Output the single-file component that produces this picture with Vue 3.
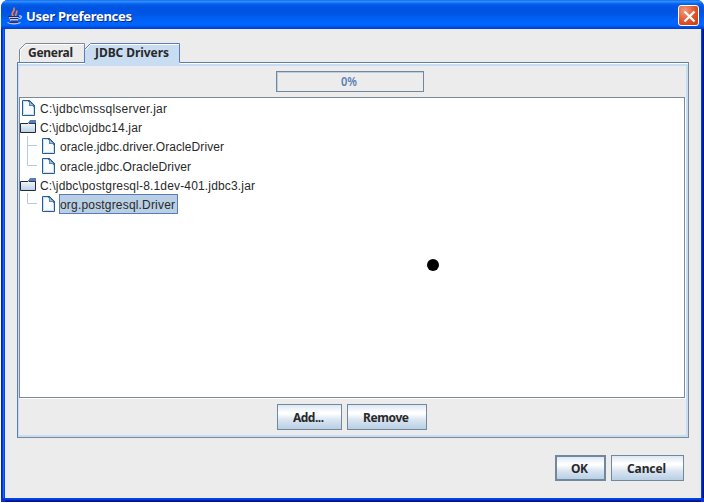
<script setup>
const rows = [
  { text: 'C:\\jdbc\\mssqlserver.jar', icon: 'file', level: 0, h: 19, w: 127 },
  { text: 'C:\\jdbc\\ojdbc14.jar', icon: 'folder', level: 0, h: 19, w: 102 },
  { text: 'oracle.jdbc.driver.OracleDriver', icon: 'file', level: 1, h: 20, w: 164 },
  { text: 'oracle.jdbc.OracleDriver', icon: 'file', level: 1, last: true, h: 19, w: 131 },
  { text: 'C:\\jdbc\\postgresql-8.1dev-401.jdbc3.jar', icon: 'folder', level: 0, h: 19, w: 215 },
  { text: 'org.postgresql.Driver', icon: 'file', level: 1, last: true, selected: true, h: 19, w: 115 },
]
</script>

<template>
  <div class="window">
    <header class="titlebar">
      <svg class="java" width="16" height="18" viewBox="0 0 16 18" fill="none">
        <path d="M6.500 9C2.500 6.500 8.500 4.500 7 .5M9 9C7.500 7 11 6 9.500 3.500" stroke="#f47b42" stroke-width="1.700" />
        <path d="M1.500 9.500H12L10.500 14H3.500z" fill="#bfc8ea" />
        <path d="M1 9.500H12M3 11.500H11.500M4 14H10.500" stroke="#242a68" stroke-width="1.200" />
        <path d="M12 9c3.500-.8 3 2.500-.5 3" stroke="#d5d5f0" stroke-width="1.200" />
        <path d="M.5 15.500C4 17.300 10 17.300 13.500 15.500" stroke="#c3c3e6" stroke-width="1.400" />
        <path d="M2.500 15.500H11" stroke="#2b3070" />
      </svg>
      <svg class="title" width="108" height="20"><text x="0" y="15" textLength="106">User Preferences</text></svg>
      <button class="close" aria-label="Close">
        <svg width="21" height="21" viewBox="0 0 21 21"><path d="M5.500 5.500l10 10M15.500 5.500l-10 10" stroke="#fff" stroke-width="2.300" /></svg>
      </button>
    </header>

    <main class="content">
      <nav class="tabs">
        <svg width="162" height="20" viewBox="0 0 162 20" class="bold">
          <path d="M.5 19V6.500L6.500.5H65.500V19" fill="#ececec" stroke="#7a8a99" />
          <path d="M1.500 19V7L7 1.500H65" fill="none" stroke="#fff" />
          <path d="M66 21V6.500L71.500.5H160.500V21" fill="#c8ddf2" />
          <path d="M65.500 19V6.500L71.500.5H160.500V19" fill="none" stroke="#5b7db5" />
          <path d="M66.500 7L71.500 1.500H160" fill="none" stroke="#fff" />
          <text x="9" y="14" textLength="45">General</text>
          <text x="76" y="14" textLength="74">JDBC Drivers</text>
        </svg>
      </nav>
      <section class="panel">
        <div class="progress"><svg width="18" height="17"><text x="1" y="13" textLength="16" lengthAdjust="spacingAndGlyphs">0%</text></svg></div>
        <div class="tree">
          <div v-for="row in rows" :key="row.text" class="row" :style="{ height: row.h + 'px' }">
            <svg v-if="row.level" class="branch" width="20" height="20" viewBox="0 0 20 20">
              <path :d="row.last ? 'M7.500 -2V8.500H17' : 'M7.500 -1V20M7.500 8.500H17'" fill="none" stroke="#b5cbe2" />
            </svg>
            <svg v-if="row.icon === 'file'" class="icon" width="20" height="16" viewBox="0 0 20 16">
              <path d="M2.500.5H9.500L14.500 5.500V15.500H2.500z" fill="#f8fbff" stroke="#285b92" />
              <path d="M3.500 14V1.500H9M4 14.500H13.500V7" fill="none" stroke="#c9dff2" />
              <path d="M8.500 .5L14.500 6.500" stroke="#285b92" stroke-width="1.800" />
              <path d="M9 1v5h5z" fill="#5b87b8" /><path d="M10.500 2.500v2h2" fill="none" stroke="#c9dff2" stroke-width=".7" />
            </svg>
            <svg v-else class="icon" width="20" height="16" viewBox="0 0 20 16">
              <defs><linearGradient id="folder-fill" x2="0" y2="1"><stop stop-color="#fff" /><stop offset="1" stop-color="#b8cfe5" /></linearGradient></defs>
              <path d="M.5 4.500H8L10 2.500H15.500V13.500H.5z" fill="url(#folder-fill)" stroke="#252b32" />
              <path d="M8 4L10 1H16V4z" fill="#5b7db5" /><path d="M9 4.500H15.500" stroke="#303c54" />
            </svg>
            <span class="label" :class="{ selected: row.selected }">
              <svg :width="row.w + 2" height="18"><text x="0" y="13" :textLength="row.w">{{ row.text }}</text></svg>
            </span>
          </div>
        </div>
        <div class="actions">
          <button class="btn add"><svg width="33" height="18"><text x="0" y="14" textLength="31">Add...</text></svg></button>
          <button class="btn remove"><svg width="48" height="18"><text x="0" y="14" textLength="46">Remove</text></svg></button>
        </div>
      </section>
      <footer class="footer">
        <button class="btn ok"><svg width="19" height="18"><text x="0" y="14" textLength="17">OK</text></svg></button>
        <button class="btn cancel"><svg width="41" height="18"><text x="0" y="14" textLength="39">Cancel</text></svg></button>
      </footer>
    </main>
    <i class="dot"></i>
  </div>
</template>

<style>
body { background: #fff; }
</style>

<style scoped>
* { box-sizing: border-box; }
svg { display: block; flex: none; }
button { padding: 0; border: 0; font: inherit; }
.window {
  position: relative; width: 703px; height: 502px; margin-left: 1px; overflow: hidden;
  border-radius: 7px 7px 0 0; background: #0831d9;
  font: 12px "Liberation Sans", Arial, sans-serif; color: #333;
}
.titlebar {
  height: 29px; display: flex; align-items: center; padding: 2px 5px 0 6px;
  background: linear-gradient(#0058e6 0, #3a93ff 1px, #2587fb 2px, #0561ec 4px, #0053e1 7px, #0055e5 14px, #0062fa 20px, #0066ff 25px, #0050e4 27px, #003ccc 29px);
}
.java { margin-right: 3px; }
.title text { font: bold 13px "Noto Sans", "Open Sans", sans-serif; fill: #fff; text-shadow: 1px 1px 0 #092a88; }
.close {
  width: 21px; height: 21px; margin-left: auto; border: 1px solid #fff; border-radius: 3px;
  background: radial-gradient(circle at 30% 25%, #f09a7c, #e2532a 55%, #c93a12);
  display: grid; place-items: center;
}
.content {
  height: 469px; width: 696px; margin-left: 4px; padding: 14px 12px 0; background: #ececec;
  box-shadow: 0 1px #0046ee, 0 2px #003de0, 0 3px #001ea0, 0 4px #00138c, -1px 0 #0046ee, -2px 0 #166cf8, -3px 0 #0040e0, -4px 0 #0020b8, 1px 0 #0040e8, 2px 0 #0022b0, 3px 0 #00138c;
}
.tabs { height: 19px; padding-left: 2px; position: relative; z-index: 1; }
.tabs svg { overflow: visible; }
.bold text, .btn text, .progress text { font: bold 12px "Noto Sans", "Open Sans", sans-serif; fill: #292929; }
.panel {
  width: 672px; height: 376px; border: 1px solid #7a8a99; border-top-color: #5b7db5; border-left-color: #5b7db5;
  padding: 8px 3px 0 1px; box-shadow: inset 0 1px #fff, inset 1px 0 #c8ddf2, inset 0 3px #c8ddf2, inset -2px -2px #c8ddf2;
}
.progress {
  width: 148px; height: 21px; margin-left: 257px; border: 1px solid #71879c;
  box-shadow: inset 1px 1px #b8cfe5; display: flex; align-items: center; justify-content: center;
}
.progress text { fill: #5b7db5; font-weight: 600; }
.progress svg { margin-right: 2px; }
.tree {
  width: 666px; height: 301px; margin-top: 5px; border: 1px solid #7a8a99; background: #fff;
  box-shadow: 1px 1px #fff; padding-top: 1px;
}
.row { display: flex; align-items: flex-start; }
.icon { margin-top: 1px; }
.branch { overflow: visible; }
.label { height: 20px; padding-top: 1px; margin-left: -1px; border: 1px solid transparent; margin-top: -1px; }
.label text { fill: #292929; }
.selected { background: #b8cfe5; border-color: #5b7db5; }
.actions { display: flex; gap: 5px; padding: 6px 0 0 258px; }
.btn {
  height: 26px; border: 1px solid #71879c; display: flex; align-items: center; justify-content: center;
  background: linear-gradient(#dde8f3 0, #fff 32%, #fff 36%, #d9e5f1 62%, #b8cfe5);
}
.add { width: 65px; }
.remove { width: 80px; }
.footer { display: flex; gap: 5px; justify-content: flex-end; padding: 17px 5px 0 0; }
.ok { width: 51px; border-width: 2px; }
.cancel { width: 73px; }
.dot { position: absolute; left: 426px; top: 259px; width: 12px; height: 12px; border-radius: 50%; background: #000; }
</style>
